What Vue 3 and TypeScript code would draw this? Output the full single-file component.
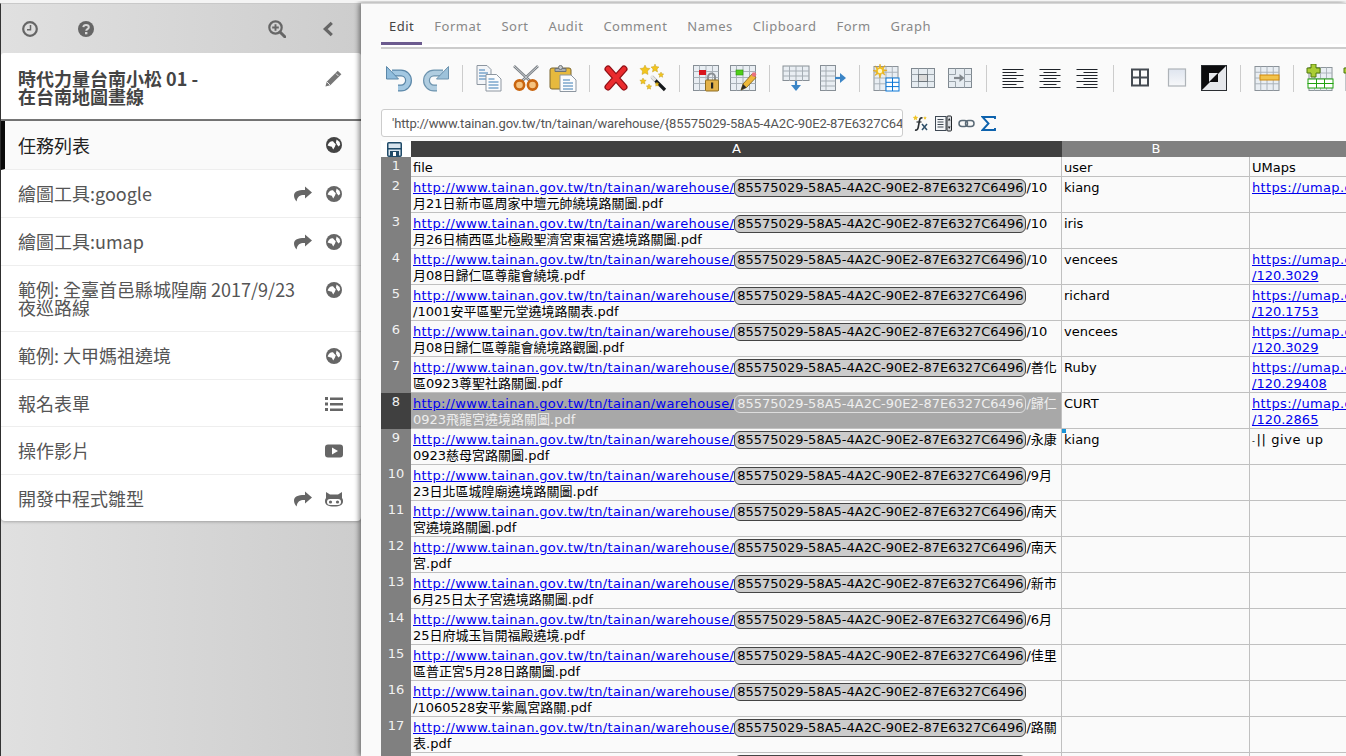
<script setup lang="ts">
interface NavItem {
  label: string
  icon: string
  share?: boolean
  active?: boolean
}

interface SheetRow {
  num: number
  rest: string
  user?: string
  umap?: string
  note?: boolean
  selected?: boolean
}

const navItems: NavItem[] = [
  { label: '任務列表', icon: 'globe', active: true },
  { label: '繪圖工具:google', icon: 'globe', share: true },
  { label: '繪圖工具:umap', icon: 'globe', share: true },
  { label: '範例: 全臺首邑縣城隍廟 2017/9/23 夜巡路線', icon: 'globe' },
  { label: '範例: 大甲媽祖遶境', icon: 'globe' },
  { label: '報名表單', icon: 'list' },
  { label: '操作影片', icon: 'play' },
  { label: '開發中程式雛型', icon: 'cat', share: true },
]

const tabs = ['Edit', 'Format', 'Sort', 'Audit', 'Comment', 'Names', 'Clipboard', 'Form', 'Graph']

const baseUrl = 'http://www.tainan.gov.tw/tn/tainan/warehouse/'
const guid = '85575029-58A5-4A2C-90E2-87E6327C6496'

const rows: SheetRow[] = [
  { num: 2, rest: '/10月21日新市區周家中壇元帥繞境路關圖.pdf', user: 'kiang', umap: 'x' },
  { num: 3, rest: '/10月26日楠西區北極殿聖濟宮東福宮遶境路關圖.pdf', user: 'iris' },
  { num: 4, rest: '/10月08日歸仁區尊龍會繞境.pdf', user: 'vencees', umap: '/120.3029' },
  { num: 5, rest: '/1001安平區聖元堂遶境路關表.pdf', user: 'richard', umap: '/120.1753' },
  { num: 6, rest: '/10月08日歸仁區尊龍會繞境路觀圖.pdf', user: 'vencees', umap: '/120.3029' },
  { num: 7, rest: '/善化區0923尊聖社路關圖.pdf', user: 'Ruby', umap: '/120.29408' },
  { num: 8, rest: '/歸仁0923飛龍宮遶境路關圖.pdf', user: 'CURT', umap: '/120.2865', selected: true },
  { num: 9, rest: '/永康0923慈母宮路關圖.pdf', user: 'kiang', note: true },
  { num: 10, rest: '/9月23日北區城隍廟遶境路關圖.pdf' },
  { num: 11, rest: '/南天宮遶境路關圖.pdf' },
  { num: 12, rest: '/南天宮.pdf' },
  { num: 13, rest: '/新市6月25日太子宮遶境路關圖.pdf' },
  { num: 14, rest: '/6月25日府城玉旨開福殿遶境.pdf' },
  { num: 15, rest: '/佳里區普正宮5月28日路關圖.pdf' },
  { num: 16, rest: '/1060528安平紫鳳宮路關.pdf' },
  { num: 17, rest: '/路關表.pdf' },
  { num: 18, rest: '/' },
]
</script>

<template>
  <svg class="defs" aria-hidden="true">
    <symbol id="i-globe" viewBox="0 0 16 16">
      <circle cx="8" cy="8" r="8" fill="currentColor" />
      <path d="M1.600 8.600C2.200 5.800 4.600 3.800 7 4.200l1.200 1.600 1.600 1.400-.8 2.400-1.800 2.800-1.400-2.600-2-.6z" fill="#fff" />
      <path d="M10.600 2.600l3 2.400.6 2.800-1.600 1.600-1.800-1.800-.8-2.400z" fill="#fff" />
    </symbol>
    <symbol id="i-share" viewBox="0 0 18 16">
      <path d="M11 .5 18 6.600 11 12.600V9C6.500 8.800 3.400 9.800 2.600 15.600 .8 13.600 0 11.600 0 9.600 0 5.200 4.400 3.900 11 4z" fill="currentColor" />
    </symbol>
    <symbol id="i-list" viewBox="0 0 18 16">
      <path d="M0 1h3v3H0zM0 6.500h3v3H0zM0 12h3v3H0zM5 1.500h13v2.500H5zM5 7h13v2.500H5zM5 12.500h13v2.500H5z" fill="currentColor" />
    </symbol>
    <symbol id="i-play" viewBox="0 0 18 14">
      <rect width="18" height="13" y=".5" rx="3" fill="currentColor" />
      <path d="M7 3.500v7l6-3.500z" fill="#fff" />
    </symbol>
    <symbol id="i-cat" viewBox="0 0 18 16">
      <path d="M1 1l4 2.500h8L17 1v6c.8 1 1 2 1 3 0 4-3 5.500-9 5.500S0 14 0 10c0-1 .2-2 1-3z" fill="currentColor" />
      <rect x="2" y="8" width="14" height="6" rx="3" fill="#fff" />
      <circle cx="5.500" cy="11" r="1.600" fill="currentColor" />
      <circle cx="12.500" cy="11" r="1.600" fill="currentColor" />
    </symbol>
    <symbol id="t-grid" viewBox="0 0 26 26">
      <rect x=".5" y=".5" width="25" height="25" fill="#e9eef3" stroke="#878f96" />
      <path d="M.5 6.500h25M.5 12.500h25M.5 18.500h25M6.500.5v25M13 .5v25M19.500.5v25" stroke="#a9b1b8" fill="none" />
    </symbol>
  </svg>

  <div class="page">
    <aside class="sidebar">
      <div class="side-head">
        <svg class="hd-icon clock" viewBox="0 0 16 16">
          <circle cx="8" cy="8" r="6.800" fill="none" stroke="currentColor" stroke-width="2.200" />
          <path d="M8.500 4v4.800H5" fill="none" stroke="currentColor" stroke-width="1.500" />
        </svg>
        <svg class="hd-icon help" viewBox="0 0 16 16">
          <circle cx="8" cy="8" r="8" fill="currentColor" />
          <path d="M5.300 6.200C5.500 4.600 6.600 4 8 4c1.600 0 2.800.9 2.800 2.200 0 1.900-2.600 1.900-2.600 3.500" fill="none" stroke="#d8d8d8" stroke-width="2" />
          <rect x="7" y="11" width="2.400" height="2.300" fill="#d8d8d8" />
        </svg>
        <span class="spacer"></span>
        <svg class="hd-icon zoom" viewBox="0 0 18 18">
          <circle cx="7.500" cy="7.500" r="6.200" fill="none" stroke="currentColor" stroke-width="2.200" />
          <path d="M7.500 4.200v6.600M4.200 7.500h6.600" stroke="currentColor" stroke-width="1.900" />
          <path d="M12 12l4.800 4.800" stroke="currentColor" stroke-width="3" stroke-linecap="round" />
        </svg>
        <svg class="hd-icon chevron" viewBox="0 0 12 16">
          <path d="M9.800 1.800 3.300 8l6.500 6.200" fill="none" stroke="currentColor" stroke-width="3.200" />
        </svg>
      </div>

      <div class="title-card">
        <div class="title-text">時代力量台南小松 01 -<br />在台南地圖畫線</div>
        <svg class="pencil" viewBox="0 0 16 16">
          <path d="M12 .6 15.400 4 5 14.400.4 15.600 1.600 11z" fill="currentColor" />
          <path d="M10.400 3.400l2.200 2.200" stroke="#fff" stroke-width=".8" />
          <path d="M1.600 11 5 14.400" stroke="#fff" stroke-width=".8" />
        </svg>
      </div>

      <nav class="nav-card">
        <a v-for="item in navItems" :key="item.label" class="nav-item" :class="{ active: item.active }">
          <span class="nav-label">{{ item.label }}</span>
          <span class="nav-icons">
            <svg v-if="item.share" class="share"><use href="#i-share" /></svg>
            <svg class="nav-icon"><use :href="`#i-${item.icon}`" /></svg>
          </span>
        </a>
      </nav>
    </aside>

    <main class="main">
      <div class="tabs">
        <span v-for="tab in tabs" :key="tab" class="tab" :class="{ on: tab === 'Edit' }">{{ tab }}</span>
      </div>

      <div class="toolbar">
        <span class="tool">
          <svg viewBox="0 0 28 28">
            <path d="M7 9h9a7.500 7.500 0 0 1 0 15h-3" fill="none" stroke="#5b87a8" stroke-width="7" />
            <path d="M7 9h9a7.500 7.500 0 0 1 0 15h-3" fill="none" stroke="#a3c8e2" stroke-width="4.600" />
            <path d="M1.500 2.500V15h12z" fill="#8fbcdc" stroke="#5b87a8" stroke-linejoin="round" />
          </svg>
        </span>
        <span class="tool">
          <svg viewBox="0 0 28 28">
            <g transform="matrix(-1 0 0 1 28 0)">
              <path d="M7 9h9a7.500 7.500 0 0 1 0 15h-3" fill="none" stroke="#6d93ae" stroke-width="7" />
              <path d="M7 9h9a7.500 7.500 0 0 1 0 15h-3" fill="none" stroke="#b0cde0" stroke-width="4.600" />
              <path d="M1.500 2.500V15h12z" fill="#9dc2da" stroke="#6d93ae" stroke-linejoin="round" />
            </g>
          </svg>
        </span>
        <i class="sep"></i>
        <span class="tool">
          <svg viewBox="0 0 28 28">
            <path d="M2 1.500h10l4 4v15H2z" fill="#f3f5f8" stroke="#8d96a0" />
            <path d="M4 6h6M4 9h9M4 12h9M4 15h9" stroke="#3d7cb4" />
            <path d="M11 10.500h10.500l4.500 4.500v12H11z" fill="#fbfcfd" stroke="#8d96a0" />
            <path d="M13.500 15h6M13.500 18h10M13.500 21h10M13.500 24h10" stroke="#3d7cb4" />
          </svg>
        </span>
        <span class="tool">
          <svg viewBox="0 0 28 28">
            <path d="M2 2 18 17M26 2 10 17" stroke="#7a7f84" stroke-width="2.600" />
            <path d="M2 2 18 17M26 2 10 17" stroke="#cdd2d6" stroke-width="1" />
            <circle cx="7.500" cy="21" r="4.600" fill="#f6c27e" stroke="#c9650f" stroke-width="2.600" />
            <circle cx="20.500" cy="21" r="4.600" fill="#f6c27e" stroke="#c9650f" stroke-width="2.600" />
          </svg>
        </span>
        <span class="tool">
          <svg viewBox="0 0 28 28">
            <rect x="1" y="4" width="21" height="21" rx="2" fill="#e6b93e" stroke="#7b6631" />
            <path d="M6 4.500h11v3H6z" fill="#a9adb0" stroke="#6d7275" />
            <circle cx="11.500" cy="3.500" r="2" fill="#c8ccd0" stroke="#6d7275" />
            <path d="M11 11h11l5 5v11.500H11z" fill="#fbfcfd" stroke="#8d96a0" />
            <path d="M14 16h7M14 19h10M14 22h10M14 25h10" stroke="#3d7cb4" />
          </svg>
        </span>
        <i class="sep"></i>
        <span class="tool">
          <svg viewBox="0 0 28 28">
            <path d="M6 5 22 23M22 5 6 23" stroke="#8f1015" stroke-width="7" stroke-linecap="round" />
            <path d="M6 5 22 23M22 5 6 23" stroke="#ea2b2e" stroke-width="4.600" stroke-linecap="round" />
          </svg>
        </span>
        <span class="tool">
          <svg viewBox="0 0 28 28">
            <path d="M13 13 26 26" stroke="#15181b" stroke-width="3.200" />
            <path d="M12 12l4.500 4.500" stroke="#e6e6e6" stroke-width="3.200" />
            <path d="M6 1l1.500 3 3.500.5-2.500 2.500.5 3.500L6 9l-3 1.500.5-3.500L1 4.500 4.500 4zM16 0l1 2.500L20 3l-2 2 .5 3L16 6.500 13.500 8 14 5l-2-2 3-.5zM4 14l1 2 2.200.3-1.600 1.500.4 2.200-2-1-2 1 .4-2.200L.8 16.300 3 16zM22 8l.8 1.800 2 .2-1.500 1.300.4 2-1.700-1-1.700 1 .4-2L19.200 10l2-.2zM10 20l.8 1.700 1.900.3-1.400 1.300.3 1.900-1.600-.9-1.600.9.300-1.900L7.300 22l1.900-.3zM18 18l.6 1.400 1.500.2-1.100 1 .3 1.500-1.300-.7-1.300.7.300-1.500-1.100-1 1.500-.2z" fill="#f3c51e" stroke="#b89312" stroke-width=".4" />
          </svg>
        </span>
        <i class="sep"></i>
        <span class="tool">
          <svg viewBox="0 0 28 28">
            <use href="#t-grid" x="1" y="1" width="26" height="26" />
            <rect x="7" y="6" width="7" height="5" fill="#d8141c" />
            <path d="M16 16v-3a3.500 3.500 0 0 1 7 0v3" fill="none" stroke="#8a8f94" stroke-width="2" />
            <rect x="13.500" y="16" width="13" height="11" rx="1" fill="#e3b24a" stroke="#8f6e22" />
            <rect x="19" y="18.500" width="2.200" height="6" fill="#222" />
          </svg>
        </span>
        <span class="tool">
          <svg viewBox="0 0 28 28">
            <use href="#t-grid" x="1" y="1" width="26" height="26" />
            <rect x="7" y="6" width="7" height="5" fill="#4fcf19" stroke="#2a8f0c" stroke-width=".6" />
            <path d="M12 26 14 20 23 10l4 3.500-9.500 10z" fill="#efb93a" stroke="#7c5d12" stroke-width=".8" />
            <path d="M12 26l2-6 3.500 3.500z" fill="#2a2a2a" />
            <circle cx="25" cy="10.500" r="2.300" fill="#e8717c" />
          </svg>
        </span>
        <i class="sep"></i>
        <span class="tool">
          <svg viewBox="0 0 28 28">
            <rect x="1" y="2" width="26" height="14.500" fill="#e9eef3" stroke="#878f96" />
            <path d="M1 7h26M1 12h26M7.500 2v15M14 2v15M20.500 2v15" stroke="#a5adb4" fill="none" />
            <path d="M14 17v6" stroke="#3b85c6" stroke-width="2.200" />
            <path d="M9 21h10l-5 6z" fill="#3b85c6" />
          </svg>
        </span>
        <span class="tool">
          <svg viewBox="0 0 28 28">
            <rect x="1.500" y="1.500" width="15" height="25" fill="#e9eef3" stroke="#878f96" />
            <path d="M1.500 7h15M1.500 12h15M1.500 17h15M1.500 22h15M7 1.500v25" stroke="#a5adb4" fill="none" />
            <path d="M16 14h7" stroke="#3b85c6" stroke-width="2.200" />
            <path d="M21 9v10l6-5z" fill="#3b85c6" />
          </svg>
        </span>
        <i class="sep"></i>
        <span class="tool">
          <svg viewBox="0 0 28 28">
            <use href="#t-grid" x="1" y="2" width="26" height="25" />
            <rect x="14" y="14" width="13" height="13" fill="#fff" stroke="#0b76d6" />
            <path d="M14 18.300h13M14 22.600h13M20.500 14v13" stroke="#0b76d6" />
            <path d="M8 0l1.400 4 3.500-2.500-1.800 4 4 .8-4 1.200 2 3.600-3.600-2L8 14l-1.400-4.500-3.600 2 2-3.600-4-1.200 4-.8-1.800-4 3.500 2.500z" fill="#f5c21c" stroke="#d79b11" stroke-width=".5" />
            <circle cx="8" cy="7" r="2.200" fill="#fff7c8" />
          </svg>
        </span>
        <span class="tool">
          <svg viewBox="0 0 28 28">
            <rect x="2.500" y="4.500" width="23" height="19" fill="#e6ecf1" stroke="#7f8890" />
            <path d="M2.500 10.500h7v7h-7M25.500 10.500h-7v7h7M9.500 4.500v6M18.500 4.500v6M9.500 17.500v6M18.500 17.500v6" fill="none" stroke="#9aa3aa" />
            <rect x="9.500" y="10.500" width="9" height="7" fill="#dadada" stroke="#6f777e" />
          </svg>
        </span>
        <span class="tool">
          <svg viewBox="0 0 28 28">
            <rect x="2.500" y="4.500" width="23" height="19" fill="#e6ecf1" stroke="#7f8890" />
            <path d="M2.500 10.500h7M2.500 17.500h7M25.500 10.500h-7v7h7M9.500 4.500v6M18.500 4.500v6M9.500 17.500v6M18.500 17.500v6" fill="none" stroke="#9aa3aa" />
            <path d="M8 14h7" stroke="#81878c" stroke-width="2.200" />
            <path d="M13.500 10v8l5-4z" fill="#81878c" />
          </svg>
        </span>
        <i class="sep"></i>
        <span class="tool">
          <svg viewBox="0 0 28 28">
            <path d="M3.500 5.500h21M3.500 8.500h14M3.500 11.500h21M3.500 14.500h14M3.500 17.500h21M3.500 20.500h14M3.500 23.500h21" stroke="#1f2329" />
          </svg>
        </span>
        <span class="tool">
          <svg viewBox="0 0 28 28">
            <path d="M3.500 5.500h21M7.500 8.500h13M3.500 11.500h21M7.500 14.500h13M3.500 17.500h21M7.500 20.500h13M3.500 23.500h21" stroke="#1f2329" />
          </svg>
        </span>
        <span class="tool">
          <svg viewBox="0 0 28 28">
            <path d="M3.500 5.500h21M10.500 8.500h14M3.500 11.500h21M10.500 14.500h14M3.500 17.500h21M10.500 20.500h14M3.500 23.500h21" stroke="#1f2329" />
          </svg>
        </span>
        <i class="sep"></i>
        <span class="tool">
          <svg viewBox="0 0 28 28">
            <rect x="6" y="5.500" width="16" height="16" fill="none" stroke="#454b52" stroke-width="2" />
            <path d="M14 5.500v16M6 13.500h16" stroke="#454b52" stroke-width="2" />
          </svg>
        </span>
        <span class="tool">
          <svg viewBox="0 0 28 28">
            <defs>
              <linearGradient id="pale" x1="0" y1="0" x2="0" y2="1">
                <stop offset="0" stop-color="#dfe5ef" />
                <stop offset="1" stop-color="#f7f8fa" />
              </linearGradient>
            </defs>
            <rect x="5.500" y="5" width="17" height="17" fill="url(#pale)" stroke="#aeb3b8" stroke-width="1.200" />
          </svg>
        </span>
        <span class="tool">
          <svg viewBox="0 0 28 28">
            <rect x="1.500" y="1.500" width="25" height="25" fill="#e6e8ec" stroke="#2a2d31" stroke-width="1" />
            <path d="M2 2h24L2 26z" fill="#0c0c0e" />
            <path d="M18 9v9H9z" fill="#0c0c0e" />
            <path d="M18 9H9v9z" fill="#e6e8ec" />
          </svg>
        </span>
        <i class="sep"></i>
        <span class="tool">
          <svg viewBox="0 0 28 28">
            <use href="#t-grid" x="1" y="2" width="26" height="25" />
            <rect x="7" y="11" width="19" height="5" fill="#f2c34c" stroke="#d18a0c" />
          </svg>
        </span>
        <i class="sep"></i>
        <span class="tool">
          <svg viewBox="0 0 28 28">
            <use href="#t-grid" x="2" y="3" width="25" height="24" />
            <rect x="2" y="15" width="25" height="4.500" fill="#fff" stroke="#21a20f" />
            <rect x="2" y="19.500" width="25" height="4.500" fill="#fff" stroke="#21a20f" />
            <path d="M10.500 15v9M18.500 15v9" stroke="#21a20f" />
            <path d="M5 0h5v4h4v5h-4v4H5V9H1V4h4z" fill="#aacd35" stroke="#517b10" />
          </svg>
        </span>
        <span class="tool">
          <svg viewBox="0 0 28 28">
            <use href="#t-grid" x="2" y="3" width="25" height="24" />
            <path d="M5 0h5v4h4v5h-4v4H5V9H1V4h4z" fill="#aacd35" stroke="#517b10" />
          </svg>
        </span>
      </div>

      <div class="formula-row">
        <div class="formula">'http://www.tainan.gov.tw/tn/tainan/warehouse/{85575029-58A5-4A2C-90E2-87E6327C6496}/10月21日新市區周家中壇元帥繞境路關圖.pdf</div>
        <span class="f-btn">
          <svg viewBox="0 0 17 17">
            <path d="M10.500 3C8.500 2.500 7.800 3.500 7.500 5.500L6.200 12.500C5.800 14.500 4.800 15.500 3 15" fill="none" stroke="#2b2f33" stroke-width="1.600" />
            <path d="M4.500 7h5" stroke="#2b2f33" stroke-width="1.200" />
            <path d="M10 9l5 6M15 9l-5 6" stroke="#2d4e68" stroke-width="1.500" />
            <path d="M3.500 0l.8 1.800 1.900.3-1.400 1.300.4 1.900-1.700-1-1.700 1 .4-1.900L.8 2.100l1.900-.3zM13 1l.5 1.200 1.300.2-1 .9.300 1.300-1.100-.7-1.100.7.300-1.300-1-.9 1.300-.2z" fill="#efc52a" />
          </svg>
        </span>
        <span class="f-btn">
          <svg viewBox="0 0 17 17">
            <rect x=".5" y="1.500" width="10.500" height="14" fill="#f4f6f8" stroke="#3e4853" />
            <path d="M2.500 4.500h6M2.500 7h6M2.500 9.500h6M2.500 12h6" stroke="#3e4853" />
            <rect x="12" y="1" width="4.500" height="15" rx="1" fill="#d7dade" stroke="#22262a" />
            <path d="M12.800 5.500 14.200 3l1.400 2.500zM12.800 11.500l1.400 2.500 1.400-2.500z" fill="#22262a" />
          </svg>
        </span>
        <span class="f-btn">
          <svg viewBox="0 0 17 17">
            <rect x="1" y="5.500" width="8.500" height="6" rx="3" fill="none" stroke="#5a6a76" stroke-width="1.500" />
            <rect x="7.500" y="5.500" width="8.500" height="6" rx="3" fill="none" stroke="#5a6a76" stroke-width="1.500" />
          </svg>
        </span>
        <span class="f-btn">
          <svg viewBox="0 0 17 17">
            <path d="M14 4V2H1.500l6 6.500-6 6.500H14v-2" fill="none" stroke="#0d62ad" stroke-width="1.900" />
          </svg>
        </span>
      </div>

      <div class="sheet-wrap">
        <table class="sheet">
          <colgroup>
            <col class="c-num" />
            <col class="c-a" />
            <col class="c-b" />
            <col class="c-c" />
          </colgroup>
          <thead>
            <tr>
              <th class="save">
                <svg viewBox="0 0 15 15">
                  <rect x=".75" y=".75" width="13.500" height="13.500" rx="1" fill="#d9e5ee" stroke="#1f4a68" stroke-width="1.500" />
                  <rect x="1" y="6" width="13" height="1.500" fill="#1f4a68" />
                  <rect x="3" y="9" width="9" height="5.500" fill="#1f4a68" />
                  <rect x="6" y="10" width="3" height="4" fill="#fff" />
                </svg>
              </th>
              <th class="head dark">A</th>
              <th class="head">B</th>
              <th class="head"></th>
            </tr>
          </thead>
          <tbody>
            <tr class="first">
              <td class="num">1</td>
              <td>file</td>
              <td>user</td>
              <td>UMaps</td>
            </tr>
            <tr v-for="row in rows" :key="row.num" class="data">
              <td class="num" :class="{ on: row.selected }">{{ row.num }}</td>
              <td :class="{ picked: row.selected }">
                <a class="link wide">{{ baseUrl }}</a><span class="pill">{{ guid }}</span>{{ row.rest }}
              </td>
              <td>{{ row.user }}</td>
              <td>
                <template v-if="row.umap && row.umap !== 'x'">
                  <a class="link wide">https://umap.openstreetmap.fr</a><br /><a class="link">{{ row.umap }}</a>
                </template>
                <a v-else-if="row.umap" class="link wide">https://umap.openstreetmap.fr</a>
                <span v-if="row.note" class="note"><span class="tiny">-</span>|| give up</span>
              </td>
            </tr>
          </tbody>
        </table>
        <span class="handle"></span>
      </div>
    </main>
  </div>
</template>

<style>
html,
body {
  margin: 0;
  height: 100%;
  overflow: hidden;
}
</style>

<style scoped>
.defs {
  position: absolute;
  width: 0;
  height: 0;
}

.page {
  display: flex;
  height: 756px;
  overflow: hidden;
  border-top: 1px solid #f4f4f4;
  box-sizing: border-box;
  background: #f4f4f4;
  font-family: 'Noto Sans CJK TC', 'Noto Sans', sans-serif;
}

.sidebar {
  width: 360px;
  flex: none;
  margin-top: 2px;
  border-top: 1px solid #c9c9c9;
  border-left: 1px solid #333;
  background: linear-gradient(to right, #e0e0e0, #cdcdcd);
}

.side-head {
  display: flex;
  align-items: center;
  height: 49px;
  padding: 0 27px 0 21px;
  color: #666;
}

.hd-icon {
  display: block;
  flex: none;
}

.clock {
  width: 16px;
  height: 16px;
}

.help {
  width: 16px;
  height: 16px;
  margin-left: 40px;
}

.spacer {
  flex: 1;
}

.zoom {
  width: 18px;
  height: 18px;
}

.chevron {
  width: 12px;
  height: 16px;
  margin-left: 36px;
}

.title-card {
  display: flex;
  justify-content: space-between;
  height: 68px;
  box-sizing: border-box;
  padding: 16px 18px 0 17px;
  background: #fff;
  border-radius: 3px 3px 0 0;
  border-bottom: 2px solid #777;
}

.title-text {
  font-size: 18px;
  font-weight: 700;
  line-height: 18px;
  color: #444;
}

.pencil {
  width: 17px;
  height: 17px;
  color: #777;
  margin: 1px 1px 0 0;
}

.nav-card {
  background: #fff;
  border-radius: 0 0 4px 4px;
  box-shadow: 0 1px 3px rgba(0, 0, 0, 0.25);
}

.nav-item {
  display: flex;
  justify-content: space-between;
  padding: 14px 18px 15px 17px;
  font-size: 18px;
  line-height: 18px;
  color: #555;
  border-bottom: 1px solid #eee;
}

.nav-item:nth-child(6) {
  padding-bottom: 14px;
}

.nav-item:last-child {
  padding-bottom: 14px;
  border-bottom: none;
}

.nav-item.active {
  padding-top: 15px;
  padding-left: 13px;
  border-left: 4px solid #0a0a0a;
  background: #fafafa;
  color: #222;
}

.nav-label {
  max-width: 290px;
}

.nav-icons {
  display: flex;
  flex: none;
  gap: 13px;
  height: 16px;
  margin-top: 2px;
  color: #666;
}

.active .nav-icons {
  margin-top: 1px;
  color: #444;
}

.share {
  width: 18px;
  height: 16px;
}

.nav-icon {
  width: 18px;
  height: 16px;
}

.main {
  position: relative;
  z-index: 1;
  flex: 1;
  min-width: 0;
  margin-top: 2px;
  border-top: 1px solid #d6d6d6;
  background: #fafafa;
  box-shadow: -2px 0 5px rgba(0, 0, 0, 0.45);
  overflow: hidden;
}

.tabs {
  display: flex;
  height: 43px;
  margin-left: 20px;
  border-bottom: 2px solid #ccc;
  box-shadow: inset 0 -3px 0 #fff;
}

.tab {
  box-sizing: border-box;
  height: 41px;
  margin-right: 4px;
  padding: 13px 8px 0;
  font-family: 'Noto Sans', sans-serif;
  font-size: 13px;
  line-height: 18px;
  letter-spacing: 0.5px;
  color: #888;
  white-space: nowrap;
}

.tab.on {
  color: #444;
  border-bottom: 3px solid #6b5a8e;
}

.toolbar {
  display: flex;
  align-items: center;
  box-sizing: border-box;
  height: 60px;
  padding: 0 0 2px 19px;
}

.tool {
  display: flex;
  flex: none;
  justify-content: center;
  width: 37px;
}

.tool svg {
  display: block;
  width: 28px;
  height: 28px;
}

.sep {
  flex: none;
  width: 1px;
  height: 27px;
  margin: 0 7.5px;
  background: #ccc;
}

.formula-row {
  display: flex;
  align-items: center;
  height: 28px;
  margin-left: 20px;
}

.formula {
  box-sizing: border-box;
  flex: none;
  width: 522px;
  height: 28px;
  padding: 0 9px 0 10px;
  overflow: hidden;
  font-family: Roboto, 'Noto Sans', sans-serif;
  font-size: 13px;
  line-height: 27px;
  letter-spacing: -0.13px;
  color: #555;
  white-space: nowrap;
  background: #fff;
  border: 1px solid #ccc;
  border-radius: 3px;
}

.f-btn {
  display: block;
  flex: none;
  width: 17px;
  height: 17px;
  margin-left: 6px;
}

.formula + .f-btn {
  margin-left: 9px;
}

.f-btn svg {
  display: block;
  width: 17px;
  height: 17px;
}

.sheet-wrap {
  position: relative;
  margin: 4px 0 0 20px;
  width: 1100px;
}

.sheet {
  width: 1100px;
  table-layout: fixed;
  border-spacing: 0;
  font-family: 'DejaVu Sans', 'Noto Sans CJK TC', sans-serif;
  font-size: 13px;
  line-height: 16px;
  color: #000;
}

.c-num {
  width: 30px;
}

.c-a {
  width: 651px;
}

.c-b {
  width: 188px;
}

.c-c {
  width: 231px;
}

th {
  height: 16px;
  padding: 0;
  font-weight: 400;
  color: #fff;
}

.save {
  background: #fff;
}

.save svg {
  display: block;
  width: 15px;
  height: 15px;
  margin-left: 6px;
}

.head {
  background: #808080;
}

.head.dark {
  background: #404040;
}

td {
  box-sizing: border-box;
  padding: 3px 2px 0;
  vertical-align: top;
  border-right: 1px solid #c0c0c0;
  border-bottom: 1px solid #c0c0c0;
  background: #fafafa;
}

.first td {
  height: 20px;
}

.data td {
  height: 36px;
}

td.num {
  padding: 1px 0 0;
  color: #f2f2f2;
  text-align: center;
  background: #808080;
  border-right: none;
  border-bottom: none;
}

td.num.on {
  background: #404040;
}

.link {
  color: #00e;
  text-decoration: underline;
}

.link.wide {
  letter-spacing: 0.35px;
}

.pill {
  display: inline-block;
  margin: -1px 0;
  padding: 0 2px;
  border: 1px solid #444;
  border-radius: 6px;
  background: #ccc;
  white-space: nowrap;
}

td.picked {
  background: #a8a8a8;
  color: #eee;
}

.picked .pill {
  color: #eee;
  border-color: #ddd;
  background: #a8a8a8;
}

.note {
  letter-spacing: 0.6px;
}

.tiny {
  font-size: 8px;
  margin-right: 1px;
}

.handle {
  position: absolute;
  left: 681px;
  top: 288px;
  width: 4px;
  height: 4px;
  background: #1a96d8;
}
</style>
